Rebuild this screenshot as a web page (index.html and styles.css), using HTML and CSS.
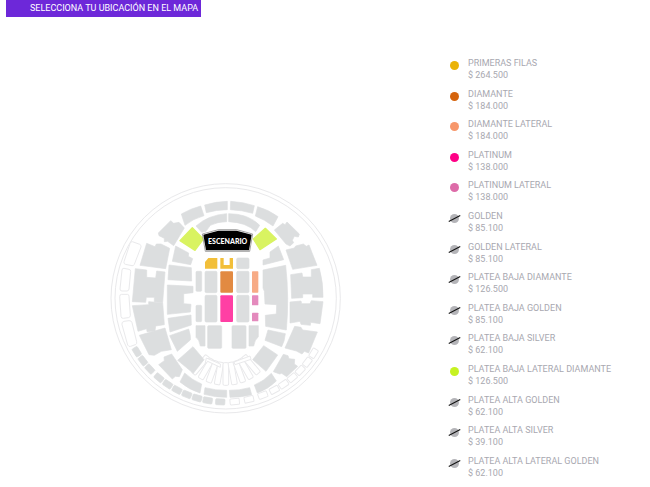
FILE: index.html
```html
<!DOCTYPE html>
<html lang="es">
<head>
    <meta charset="UTF-8">
    <meta name="viewport" content="width=device-width, initial-scale=1.0">
    <title>Selecciona tu ubicación</title>
    <link rel="stylesheet" href="styles.css">
</head>
<body>

    <h1 class="title">SELECCIONA TU UBICACIÓN EN EL MAPA</h1>

    <main class="content">
        <div class="map">
            <svg class="venue" viewBox="0 0 720 720" role="img" aria-label="Mapa del recinto">
                <defs>
                    <rect id="box" x="348" y="663" width="28" height="18" rx="3"/>
                    <rect id="slat" x="354" y="554" width="17" height="68" rx="4"/>
                </defs>

                <!-- Outer walls -->
                <g class="wall">
                    <circle cx="362" cy="361" r="344"/>
                    <circle cx="362" cy="361" r="332"/>
                </g>

                <!-- Boxes without seats -->
                <g class="outline">
                    <path d="M82 191l22 8q6 3 4 8l-20 52q-2 5-7 4l-20-4q-6-2-4-8l18-54q2-7 7-6z"/>
                    <path d="M57 271l15 3q6 1 5 7l-5 52q-1 6-6 6H51q-6 0-6-6l6-57q1-6 6-5z"/>
                    <path d="M50 349h17q5 0 5 6l4 57q0 6-6 7l-15 2q-6 1-7-6l-4-59q0-7 6-7z"/>
                    <path d="M57 430l15-2q7-1 9 6l14 57q2 7-4 9l-14 5q-6 2-9-4L51 440q-2-8 6-10z"/>
                    <use href="#box" transform="rotate(-5 362 361)"/>
                    <use href="#box" transform="rotate(-13 362 361)"/>
                    <use href="#box" transform="rotate(-21 362 361)"/>
                    <use href="#box" transform="rotate(-28 362 361)"/>
                    <use href="#box" transform="rotate(-34 362 361)"/>
                    <use href="#box" transform="rotate(-40 362 361)"/>
                    <use href="#box" transform="rotate(-46 362 361)"/>
                    <use href="#box" transform="rotate(-52 362 361)"/>
                    <use href="#box" transform="rotate(-58 362 361)"/>
                    <use href="#slat" transform="rotate(40 362 470)"/>
                    <use href="#slat" transform="rotate(30 362 470)"/>
                    <use href="#slat" transform="rotate(20 362 470)"/>
                    <use href="#slat" transform="rotate(10 362 470)"/>
                    <use href="#slat"/>
                    <use href="#slat" transform="rotate(-10 362 470)"/>
                    <use href="#slat" transform="rotate(-20 362 470)"/>
                    <use href="#slat" transform="rotate(-30 362 470)"/>
                    <use href="#slat" transform="rotate(-40 362 470)"/>
                    <path d="M300 560l8-10 38 18v-10l-42-18zM390 560l48-16-3-10-48 18z"/>
                </g>

                <g class="sold">
                    <!-- Lower boxes -->
                    <use href="#box" transform="rotate(59 362 361)"/>
                    <use href="#box" transform="rotate(53 362 361)"/>
                    <use href="#box" transform="rotate(47 362 361)"/>
                    <use href="#box" transform="rotate(40 362 361)"/>
                    <use href="#box" transform="rotate(34 362 361)"/>
                    <use href="#box" transform="rotate(28 362 361)"/>
                    <use href="#box" transform="rotate(22 362 361)"/>
                    <use href="#box" transform="rotate(16 362 361)"/>
                    <use href="#box" transform="rotate(10 362 361)"/>
                    <use href="#box" transform="rotate(3 362 361)"/>

                    <!-- Platea alta -->
                    <path d="M299 81Q332 71 367 70V95Q335 95 304 104z"/>
                    <path d="M229 108Q256 92 287 84L297 113Q264 122 240 142z"/>
                    <path d="M160 165L197 128 206 136 222 133 238 150 206 203 188 190 178 191 178 181 162 173z"/>
                    <path d="M125 196L150 206 154 198 168 198 194 211 182 272 105 262z"/>
                    <path d="M91 272L125 276V298L152 300 155 279 180 282 173 373 148 371 148 358 124 358 122 373 82 371z"/>
                    <path d="M82 383L131 380V371L173 374 178 440 152 444 150 459 126 461 125 452 99 460z"/>
                    <path d="M103 472L180 450 199 515 169 520 148 532 132 530z"/>
                    <path d="M161 560L178 548 177 537 200 528 232 575 223 596 211 595 202 603z"/>
                    <path d="M239 585Q262 607 290 618L285 645Q252 635 225 612z"/>
                    <path d="M300 629Q330 637 365 637V658Q330 658 297 649z"/>
                    <path d="M377 70Q414 72 448 83L443 106Q410 96 376 95z"/>
                    <path d="M458 86Q490 95 519 116L504 144Q480 125 451 114z"/>
                    <path d="M508 156L533 136 540 140 546 132 583 168 580 177 568 175 562 187 566 194 555 204 543 198z"/>
                    <path d="M543 216L568 210 572 204 595 198 604 205 612 201 636 262 563 274z"/>
                    <path d="M557 290L591 285 593 297H619V275L643 271Q655 315 654 358H623V348H593V359L560 361z"/>
                    <path d="M555 372L588 369 590 377H615L619 368 654 371 645 437 617 433 616 442 588 439 585 430 555 435z"/>
                    <path d="M569 445L588 448 593 456 637 462 611 525 598 520 591 528 574 519 540 510z"/>
                    <path d="M535 529L549 533 552 542 569 544 568 558 578 565 545 596 530 586 524 588 505 581z"/>
                    <path d="M448 621Q475 611 499 586L514 609Q490 633 457 645z"/>
                    <path d="M373 637Q405 637 434 629L440 650Q410 658 375 658z"/>

                    <!-- Platea baja -->
                    <path d="M273 144Q310 111 365 107V131Q338 131 316 142L303 160 290 163z"/>
                    <path d="M212 204L251 225 250 235 263 242 257 260 202 250z"/>
                    <path d="M192 261L259 269 260 309 189 305z"/>
                    <path d="M187 321L264 325V344L236 347V377L258 379 256 402 187 409z"/>
                    <path d="M189 421L258 411 259 441 195 462z"/>
                    <path d="M194 473L251 453Q258 475 256 486L217 520z"/>
                    <path d="M218 547L264 506 297 545 265 586z"/>
                    <path d="M371 107Q430 107 464 142L452 161Q424 133 371 131z"/>
                    <path d="M495 222L520 204 536 245 474 261V246L495 240z"/>
                    <path d="M474 276L542 262Q553 360 544 456L482 445 481 412 514 408 515 380 480 378 478 340 474 330z"/>
                    <path d="M489 456L541 467Q539 490 530 506L480 487z"/>
                    <path d="M476 503L518 531 483 580 443 545z"/>

                    <!-- Floor -->
                    <rect x="273" y="280" width="17" height="60" rx="3"/>
                    <rect x="273" y="382" width="17" height="49" rx="3"/>
                    <path d="M273 443H300V504H286Q283 485 273 478z"/>
                    <rect x="300" y="280" width="36" height="64" rx="4"/>
                    <rect x="300" y="352" width="36" height="80" rx="4"/>
                    <rect x="308" y="443" width="42" height="68" rx="3"/>
                    <rect x="395" y="240" width="37" height="32" rx="4"/>
                    <rect x="395" y="280" width="37" height="64" rx="4"/>
                    <rect x="395" y="352" width="37" height="80" rx="4"/>
                    <rect x="381" y="443" width="42" height="68" rx="3"/>
                    <path d="M432 443H460V476Q449 485 446 504H432z"/>
                </g>

                <!-- Available sections -->
                <g class="available">
                    <path class="lateral-diamante" d="M262 149L295 183 270 217 225 188z"/>
                    <path class="lateral-diamante" d="M481 151L514 183 465 215 445 183z"/>
                </g>
                <path class="primeras" d="M310 240H337V272H300V252z"/>
                <path class="primeras" d="M346 240H356V261H374V240H384V272H346z"/>
                <rect class="diamante" x="346" y="280" width="38" height="64" rx="3"/>
                <rect class="diamante-lateral" x="441" y="280" width="19" height="64" rx="2"/>
                <rect class="platinum" x="346" y="352" width="38" height="80" rx="3"/>
                <rect class="platinum-lateral" x="441" y="352" width="19" height="30" rx="2"/>
                <rect class="platinum-lateral" x="441" y="404" width="19" height="26" rx="2"/>

                <!-- Stage -->
                <path class="stage-edge" d="M292 168L340 155H395L443 168 434 220H301z"/>
                <path class="stage" d="M295 170L340 158H395L440 170 432 217H303z"/>
                <text class="stage-name" x="368" y="199">ESCENARIO</text>
            </svg>
        </div>

        <ul class="legend">
            <li><span class="dot yellow"></span><p>PRIMERAS FILAS<br>$ 264.500</p></li>
            <li><span class="dot orange"></span><p>DIAMANTE<br>$ 184.000</p></li>
            <li><span class="dot peach"></span><p>DIAMANTE LATERAL<br>$ 184.000</p></li>
            <li><span class="dot magenta"></span><p>PLATINUM<br>$ 138.000</p></li>
            <li><span class="dot pink"></span><p>PLATINUM LATERAL<br>$ 138.000</p></li>
            <li><span class="dot off"></span><p>GOLDEN<br>$ 85.100</p></li>
            <li><span class="dot off"></span><p>GOLDEN LATERAL<br>$ 85.100</p></li>
            <li><span class="dot off"></span><p>PLATEA BAJA DIAMANTE<br>$ 126.500</p></li>
            <li><span class="dot off"></span><p>PLATEA BAJA GOLDEN<br>$ 85.100</p></li>
            <li><span class="dot off"></span><p>PLATEA BAJA SILVER<br>$ 62.100</p></li>
            <li><span class="dot lime"></span><p>PLATEA BAJA LATERAL DIAMANTE<br>$ 126.500</p></li>
            <li><span class="dot off"></span><p>PLATEA ALTA GOLDEN<br>$ 62.100</p></li>
            <li><span class="dot off"></span><p>PLATEA ALTA SILVER<br>$ 39.100</p></li>
            <li><span class="dot off"></span><p>PLATEA ALTA LATERAL GOLDEN<br>$ 62.100</p></li>
        </ul>
    </main>

</body>
</html>
```
FILE: styles.css
```css
* {
    box-sizing: border-box;
}
body {
    display: flex;
    flex-direction: column;
    min-height: 100vh;
    margin: 0;
    background-color: #fff;
    font-family: Roboto, sans-serif;
}
.title {
    align-self: flex-start;
    margin: 0 0 0 6px;
    padding: 0 3px 0 24px;
    background-color: #6d28d9;
    color: #fff;
    font-size: 9px;
    font-weight: 400;
    line-height: 17px;
}
.content {
    flex: 1;
    display: grid;
    grid-template-columns: 9fr 4fr;
}
.map {
    display: flex;
    justify-content: center;
    align-items: flex-end;
    padding-bottom: 69px;
}
.venue {
    width: 240px;
    height: 240px;
}
.wall, .outline {
    fill: none;
    stroke: #e9e9eb;
    stroke-width: 3;
}
.outline {
    fill: #fff;
}
.sold {
    fill: #dcdedf;
    stroke: #dcdedf;
    stroke-width: 2;
    stroke-linejoin: round;
}
.available {
    stroke: #d9f361;
    stroke-width: 4;
    stroke-linejoin: round;
}
.lateral-diamante {
    fill: #d9f361;
}
.primeras {
    fill: #f2bf3a;
}
.diamante {
    fill: #e28a42;
}
.diamante-lateral {
    fill: #f7ab86;
}
.platinum {
    fill: #ff3fa4;
}
.platinum-lateral {
    fill: #e48abd;
}
.stage-edge {
    fill: #fff;
    stroke: #777;
    stroke-width: 2;
}
.stage {
    fill: #000;
}
.stage-name {
    fill: #fff;
    font-family: Lato, sans-serif;
    font-size: 21px;
    font-weight: 900;
    text-anchor: middle;
}
.legend {
    display: flex;
    flex-direction: column;
    justify-content: space-between;
    margin: 0;
    padding: 40px 0 8px;
    list-style: none;
    color: #a8a8b0;
    font-size: 9px;
    line-height: 12px;
}
.legend li {
    display: flex;
    gap: 9px;
}
.legend p {
    margin: 0;
}
.dot {
    position: relative;
    width: 9px;
    height: 9px;
    margin-top: 4px;
    border-radius: 50%;
}
.yellow {
    background-color: #eab308;
}
.orange {
    background-color: #d5640d;
}
.peach {
    background-color: #f7976b;
}
.magenta {
    background-color: #ff0086;
}
.pink {
    background-color: #dd6ba8;
}
.lime {
    background-color: #c6f222;
}
.off {
    background-color: #b4b4b8;
}
.off::after {
    content: "";
    position: absolute;
    top: 4px;
    left: -2px;
    width: 13px;
    height: 1px;
    background-color: #111;
    transform: rotate(-28deg);
}
```
